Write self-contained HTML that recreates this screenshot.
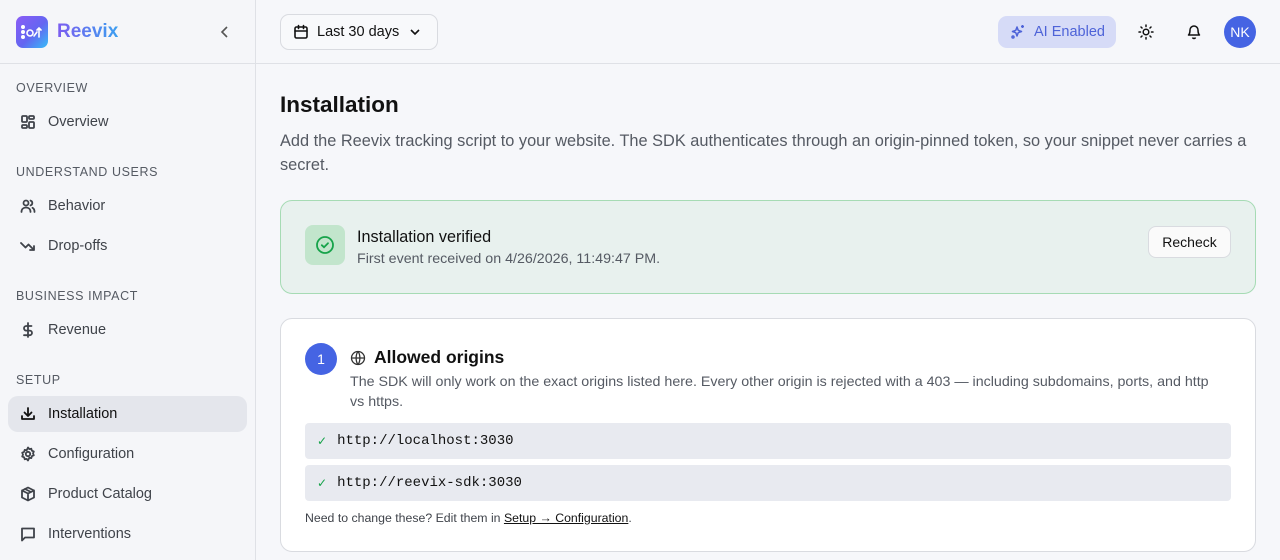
<!DOCTYPE html>
<html><head><meta charset="utf-8"><style>
*{box-sizing:border-box;margin:0;padding:0}
body{width:1280px;height:560px;overflow:hidden;background:#f6f7fa;font-family:"Liberation Sans",sans-serif;color:#111;position:relative}
.sb{position:absolute;left:0;top:0;width:256px;height:560px;border-right:1px solid #dfe1e6;background:#f5f6f9}
.logo{height:64px;border-bottom:1px solid #dfe1e6;display:flex;align-items:center;padding-left:16px}
.lg{width:32px;height:32px;border-radius:7px;background:linear-gradient(135deg,#8b5cf6,#6366f1 55%,#38bdf8);display:flex;align-items:center;justify-content:center}
.brand{font-size:19px;font-weight:bold;margin-left:9px;background:linear-gradient(90deg,#7c5cf0,#3b9ff0);-webkit-background-clip:text;color:transparent}
.sec{position:absolute;left:16px;font-size:12.5px;letter-spacing:.6px;color:#555a63}
.it{position:absolute;left:8px;width:239px;height:36px;border-radius:10px;display:flex;align-items:center;padding-left:12px;font-size:14.5px;color:#3f434a}
.it svg{width:16px;height:16px;margin-right:12px;fill:none;stroke:#3f434a;stroke-width:1.8;stroke-linecap:round;stroke-linejoin:round}
.it.act{background:#e4e6ec;color:#111;font-weight:500}
.it.act svg{stroke:#111}
.hd{position:absolute;left:256px;top:0;right:0;height:64px;border-bottom:1px solid #dfe1e6}
.dd{position:absolute;left:24px;top:14px;width:158px;height:36px;border:1px solid #d9dbe0;border-radius:9px;background:#f8f9fb;display:flex;align-items:center;padding-left:12px;font-size:14.5px}
.ai{position:absolute;left:742px;top:16px;width:118px;height:32px;border-radius:9px;background:#d6dbf7;color:#4e63d8;font-size:14.5px;display:flex;align-items:center;padding-left:12px}
.av{position:absolute;left:968px;top:16px;width:32px;height:32px;border-radius:50%;background:#4564e3;color:#fff;font-size:14px;display:flex;align-items:center;justify-content:center}
h1{position:absolute;left:280px;top:92px;font-size:22.5px;font-weight:600}
.sub{position:absolute;left:280px;top:129px;width:980px;font-size:16.35px;line-height:24px;color:#555a63}
.ver{position:absolute;left:280px;top:200px;width:976px;height:94px;border:1px solid #a6dbb4;border-radius:12px;background:#e8f1ee}
.ck{position:absolute;left:24px;top:24px;width:40px;height:40px;border-radius:8px;background:#c2e5cc;display:flex;align-items:center;justify-content:center}
.btn{position:absolute;right:24px;top:25px;width:83px;height:32px;border:1px solid #d9dbe0;border-radius:8px;background:#fafafa;font-size:14px;display:flex;align-items:center;justify-content:center}
.card{position:absolute;left:280px;top:318px;width:976px;height:234px;border:1px solid #d9dbe0;border-radius:12px;background:#fff}
.num{position:absolute;left:24px;top:24px;width:32px;height:32px;border-radius:50%;background:#4564e3;color:#fff;font-size:14px;display:flex;align-items:center;justify-content:center}
.org{position:absolute;left:24px;width:926px;height:36px;background:#e8eaf0;border-radius:4px;display:flex;align-items:center;padding-left:12px;font-family:"Liberation Mono",monospace;font-size:14px;color:#111}
</style></head><body>
<div class="sb">
 <div class="logo"><div class="lg"><svg width="22" height="16" viewBox="0 0 22 16" fill="none" stroke="#fff" stroke-width="1.6" stroke-linecap="round"><circle cx="2" cy="3" r="1.2" fill="#fff"/><circle cx="2" cy="8" r="1.2" fill="#fff"/><circle cx="2" cy="13" r="1.2" fill="#fff"/><circle cx="9" cy="9" r="3"/><path d="M13 12l3-4M18 13V4M16 6l2-2 2 2"/></svg></div><span class="brand">Reevix</span>
 <svg style="position:absolute;left:219px;top:25px" width="12" height="14" viewBox="0 0 12 14" fill="none" stroke="#555" stroke-width="1.6"><path d="M8 2L3 7l5 5"/></svg></div>
 <div class="sec" style="top:81px">OVERVIEW</div>
 <div class="it" style="top:104px"><svg viewBox="0 0 16 16"><rect x="2" y="2" width="5" height="6" rx="1"/><rect x="9" y="2" width="5" height="3" rx="1"/><rect x="9" y="8" width="5" height="6" rx="1"/><rect x="2" y="11" width="5" height="3" rx="1"/></svg>Overview</div>
 <div class="sec" style="top:165px">UNDERSTAND USERS</div>
 <div class="it" style="top:188px"><svg viewBox="0 0 16 16"><circle cx="6" cy="5" r="2.5"/><path d="M1.5 14c0-3 2-4.5 4.5-4.5s4.5 1.5 4.5 4.5M10.5 2.6a2.5 2.5 0 010 4.8M12.5 9.8c1.3.6 2 2 2 4.2"/></svg>Behavior</div>
 <div class="it" style="top:228px"><svg viewBox="0 0 16 16"><path d="M1 5l4.5 4.5 3-3L14 12M10 12h4V8"/></svg>Drop-offs</div>
 <div class="sec" style="top:289px">BUSINESS IMPACT</div>
 <div class="it" style="top:312px"><svg viewBox="0 0 16 16"><path d="M8 1v14M11.5 4H6.3a2.3 2.3 0 000 4.6h3.4a2.3 2.3 0 010 4.6H4"/></svg>Revenue</div>
 <div class="sec" style="top:373px">SETUP</div>
 <div class="it act" style="top:396px"><svg viewBox="0 0 16 16"><path d="M8 2v8M4.5 6.5L8 10l3.5-3.5M2 10v3h12v-3"/></svg>Installation</div>
 <div class="it" style="top:436px"><svg viewBox="0 0 16 16"><circle cx="8" cy="8" r="2.2"/><path d="M8 1.5l1.3 1.6 2-.4.6 2 1.9.8-.8 1.9.8 1.9-1.9.8-.6 2-2-.4L8 14.5l-1.3-1.6-2 .4-.6-2-1.9-.8.8-1.9-.8-1.9 1.9-.8.6-2 2 .4z"/></svg>Configuration</div>
 <div class="it" style="top:476px"><svg viewBox="0 0 16 16"><path d="M8 1.5l6 3v7l-6 3-6-3v-7zM2 4.5l6 3 6-3M8 7.5v7M5 3l6 3"/></svg>Product Catalog</div>
 <div class="it" style="top:516px"><svg viewBox="0 0 16 16"><path d="M2 2.5h12v9H5l-3 3z"/></svg>Interventions</div>
</div>
<div class="hd">
 <div class="dd"><svg width="16" height="16" viewBox="0 0 16 16" fill="none" stroke="#111" stroke-width="1.6" stroke-linecap="round"><rect x="2" y="3" width="12" height="11" rx="1.5"/><path d="M2 7h12M5.5 1.5v3M10.5 1.5v3"/></svg><span style="margin-left:8px">Last 30 days</span><svg style="margin-left:10px" width="12" height="12" viewBox="0 0 12 12" fill="none" stroke="#111" stroke-width="1.6"><path d="M2 4l4 4 4-4"/></svg></div>
 <div class="ai"><svg width="16" height="16" viewBox="0 0 16 16" fill="none" stroke="#4e63d8" stroke-width="1.5" stroke-linejoin="round"><path d="M7 3l1.2 3.3L11.5 7.5 8.2 8.7 7 12 5.8 8.7 2.5 7.5 5.8 6.3z"/><path d="M12.5 1v3M11 2.5h3"/><circle cx="3" cy="13" r="1"/></svg><span style="margin-left:8px">AI Enabled</span></div>
 <svg style="position:absolute;left:882px;top:24px" width="16" height="16" viewBox="0 0 16 16" fill="none" stroke="#111" stroke-width="1.5" stroke-linecap="round"><circle cx="8" cy="8" r="2.8"/><path d="M8 1v1.5M8 13.5V15M1 8h1.5M13.5 8H15M3 3l1 1M12 12l1 1M3 13l1-1M12 4l1-1"/></svg>
 <svg style="position:absolute;left:930px;top:23px" width="16" height="17" viewBox="0 0 16 17" fill="none" stroke="#111" stroke-width="1.5" stroke-linejoin="round"><path d="M4 7a4 4 0 018 0c0 4 1.5 5 1.5 5h-11S4 11 4 7zM6.5 14.5a1.6 1.6 0 003 0"/></svg>
 <div class="av">NK</div>
</div>
<h1>Installation</h1>
<div class="sub">Add the Reevix tracking script to your website. The SDK authenticates through an origin-pinned token, so your snippet never carries a secret.</div>
<div class="ver">
 <div class="ck"><svg width="20" height="20" viewBox="0 0 20 20" fill="none" stroke="#16a34a" stroke-width="1.8" stroke-linecap="round"><circle cx="10" cy="10" r="8"/><path d="M6.8 10.2l2.2 2 4-4"/></svg></div>
 <div style="position:absolute;left:76px;top:27px;font-size:16.2px;font-weight:500">Installation verified</div>
 <div style="position:absolute;left:76px;top:50px;font-size:14.25px;color:#555a63">First event received on 4/26/2026, 11:49:47 PM.</div>
 <div class="btn">Recheck</div>
</div>
<div class="card">
 <div class="num">1</div>
 <svg style="position:absolute;left:69px;top:31px" width="16" height="16" viewBox="0 0 16 16" fill="none" stroke="#333" stroke-width="1.3"><circle cx="8" cy="8" r="6.5"/><path d="M1.5 8h13M8 1.5c-2.5 3-2.5 10 0 13M8 1.5c2.5 3 2.5 10 0 13"/></svg>
 <div style="position:absolute;left:93px;top:28px;font-size:17.5px;font-weight:600">Allowed origins</div>
 <div style="position:absolute;left:69px;top:53px;width:870px;font-size:14.25px;line-height:20px;color:#555a63">The SDK will only work on the exact origins listed here. Every other origin is rejected with a 403 — including subdomains, ports, and http vs https.</div>
 <div class="org" style="top:104px"><span style="color:#16a34a;font-family:'DejaVu Sans';font-size:12px;margin-right:10px">✓</span>http://localhost:3030</div>
 <div class="org" style="top:146px"><span style="color:#16a34a;font-family:'DejaVu Sans';font-size:12px;margin-right:10px">✓</span>http://reevix-sdk:3030</div>
 <div style="position:absolute;left:24px;top:192px;font-size:12.3px;color:#3f434a">Need to change these? Edit them in <span style="text-decoration:underline;color:#111">Setup → Configuration</span>.</div>
</div>
</body></html>
